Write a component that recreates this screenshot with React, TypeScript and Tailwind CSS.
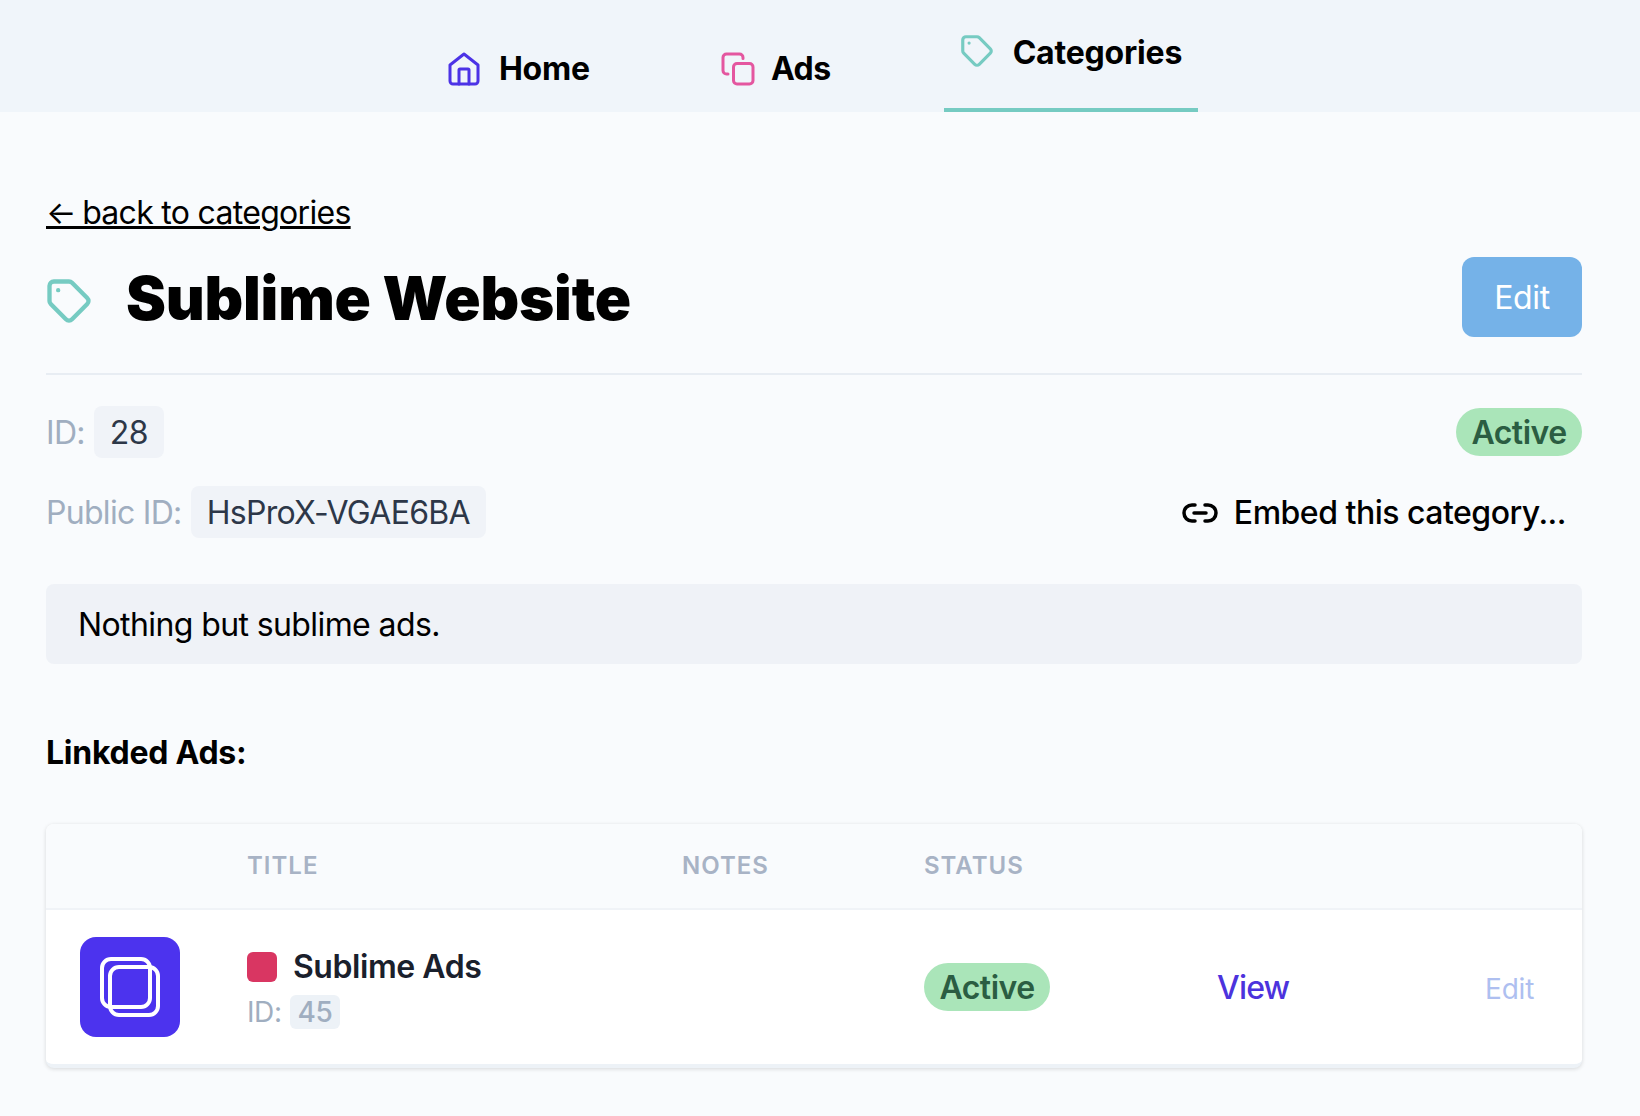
const font = { fontFamily: "Inter, sans-serif" };

function HomeIcon() {
  return (
    <svg className="w-[32px] h-[34px]" viewBox="0 0 32 34" fill="none" stroke="#4c33e6" strokeWidth="3" strokeLinejoin="round" strokeLinecap="round">
      <path d="M16 2 L30 13 V29 a3 3 0 0 1 -3 3 H5 a3 3 0 0 1 -3 -3 V13 Z" />
      <path d="M11 32 V18 a1 1 0 0 1 1 -1 h8 a1 1 0 0 1 1 1 V32" />
    </svg>
  );
}
function CopyIcon() {
  return (
    <svg className="w-[34px] h-[34px]" viewBox="0 0 34 34" fill="none" stroke="#e4569f" strokeWidth="3" strokeLinecap="round">
      <rect x="12.5" y="11.5" width="19.5" height="20.5" rx="3.5" />
      <path d="M7 22 H5.5 a3.5 3.5 0 0 1 -3.5 -3.5 V5.5 a3.5 3.5 0 0 1 3.5 -3.5 h13 a3.5 3.5 0 0 1 3.5 3.5 v1" />
    </svg>
  );
}
function TagIcon({ className }: { className: string }) {
  return (
    <svg className={className} viewBox="0 0 24 24" fill="none" stroke="#76cbc2" strokeWidth="2" strokeLinecap="round" strokeLinejoin="round">
      <path d="M7 7h.01M5 3h7c.512 0 1.024.195 1.414.586l7 7a2 2 0 010 2.828l-7 7a2 2 0 01-2.828 0l-7-7A1.994 1.994 0 013 12V5a2 2 0 012-2z" />
    </svg>
  );
}
function Badge() {
  return (
    <span className="inline-flex items-center justify-center w-[126px] h-[48px] pt-[1px] rounded-full bg-[#aae5b9] text-[#2b5d42] text-[32px] font-semibold tracking-[-0.5px]">Active</span>
  );
}

export default function App() {
  return (
    <div className="min-h-[1116px] bg-[#f9fbfd] text-black" style={font}>
      <nav className="h-[112px] bg-[#f0f5fa] flex justify-center pr-[13px]">
        <a className="flex items-center gap-[19px] pl-[19px] pr-[13px] pt-[26px] text-[32px] font-bold"><HomeIcon /><span className="tracking-[-0.2px]">Home</span></a>
        <a className="ml-[102px] flex items-center gap-[16px] px-4 pt-[26px] text-[32px] font-bold"><CopyIcon /><span className="tracking-[-0.5px]">Ads</span></a>
        <a className="ml-[97px] flex items-center gap-[17px] px-4 pb-[2px] text-[32px] font-bold border-b-4 border-[#76cbc2]"><TagIcon className="w-[38px] h-[38px] mt-[-4px] ml-[-2px]" /><span className="tracking-[-0.2px]">Categories</span></a>
      </nav>

      <main className="pl-[46px] pr-[58px] pt-[79px]">
        <a className="text-[32px] leading-[44px] underline decoration-[3px] underline-offset-[2px] block tracking-[-0.7px]"><span className="mr-[-2px]">←</span> back to categories</a>

        <div className="mt-[22px] h-[80px] flex items-center justify-between border-b-2 border-[#e8edf3] pb-[36px] box-content">
          <div className="flex items-center gap-[31px]">
            <TagIcon className="w-[52px] h-[52px] ml-[-3px] mt-[8px]" />
            <h1 className="text-[60px] font-black leading-none tracking-[-0.2px] pt-[2px]">Sublime Website</h1>
          </div>
          <button className="w-[120px] h-[80px] pt-[1px] rounded-[12px] bg-[#75b2e8] text-white text-[32px] tracking-[-0.4px]">Edit</button>
        </div>

        <div className="mt-[31px] flex items-center justify-between h-[52px]">
          <div className="flex items-center gap-[9px] text-[32px] tracking-[-0.7px]">
            <span className="text-[#a0aec0] pt-[1px]">ID:</span>
            <span className="h-[52px] px-[16px] pt-[1px] rounded-[8px] bg-[#f0f3f8] text-[#2d3748] flex items-center">28</span>
          </div>
          <Badge />
        </div>

        <div className="mt-[28px] flex items-center justify-between h-[52px]">
          <div className="flex items-center gap-[9px] text-[32px] tracking-[-0.7px]">
            <span className="text-[#a0aec0] pt-[1px]">Public ID:</span>
            <span className="h-[52px] px-[16px] pt-[1px] rounded-[8px] bg-[#f0f3f8] text-[#2d3748] flex items-center">HsProX-VGAE6BA</span>
          </div>
          <a className="flex items-center gap-[16px] pr-[16px] pt-[1px] text-[32px] font-medium tracking-[-0.5px]">
            <svg className="w-[36px] h-[20px]" viewBox="0 0 36 20" fill="none" stroke="#000" strokeWidth="3.5" strokeLinecap="round">
              <path d="M13 2 H10 a8 8 0 0 0 0 16 h3" />
              <path d="M23 2 h3 a8 8 0 0 1 0 16 h-3" />
              <path d="M12 10 H24" />
            </svg>
            <span>Embed this category...</span>
          </a>
        </div>

        <p className="mt-[46px] h-[80px] px-[32px] pt-[2px] rounded-[8px] bg-[#eff2f7] flex items-center text-[32px] tracking-[-0.6px]">Nothing but sublime ads.</p>

        <h2 className="mt-[67px] text-[32px] leading-[44px] font-bold tracking-[-0.25px]">Linkded Ads:</h2>

        <div className="mt-[49px] rounded-[8px] bg-white border-b-4 border-[#edf2f7] shadow-[0_1px_4px_rgba(0,0,0,0.14)] overflow-hidden">
          <div className="h-[86px] grid grid-cols-[201px_435px_242px_1fr] items-center bg-[#f9fbfd] border-b-2 border-[#f0f3f7] text-[24px] font-semibold tracking-[1px] text-[#a8b3c5]">
            <span />
            <span>TITLE</span>
            <span>NOTES</span>
            <span>STATUS</span>
          </div>
          <div className="h-[154px] grid grid-cols-[201px_435px_242px_293px_268px_1fr] items-center">
            <div className="pl-[34px]">
              <div className="w-[100px] h-[100px] rounded-[16px] bg-[#4c33ee] flex items-center justify-center">
                <svg className="w-[60px] h-[60px]" viewBox="0 0 60 60" fill="none" stroke="#fff" strokeWidth="4">
                  <rect x="2" y="2" width="48" height="48" rx="9" />
                  <rect x="10" y="10" width="48" height="48" rx="9" />
                </svg>
              </div>
            </div>
            <div className="pt-[2px]">
              <div className="flex items-center gap-[16px]">
                <span className="w-[30px] h-[30px] rounded-[6px] bg-[#d93662]" />
                <span className="text-[32px] font-semibold text-[#1a202c] tracking-[-0.45px]">Sublime Ads</span>
              </div>
              <div className="flex items-center gap-[8px] text-[28px] text-[#a0aec0] tracking-[-0.4px]">
                <span>ID:</span>
                <span className="h-[34px] px-[8px] rounded-[6px] bg-[#edf2f7] font-medium flex items-center">45</span>
              </div>
            </div>
            <span />
            <div><Badge /></div>
            <a className="text-[32px] font-medium text-[#4c33dd] tracking-[-0.8px] pt-[2px]">View</a>
            <a className="text-[28px] text-[#aebff0] pt-[4px] tracking-[-0.2px]">Edit</a>
          </div>
        </div>
      </main>
    </div>
  );
}
